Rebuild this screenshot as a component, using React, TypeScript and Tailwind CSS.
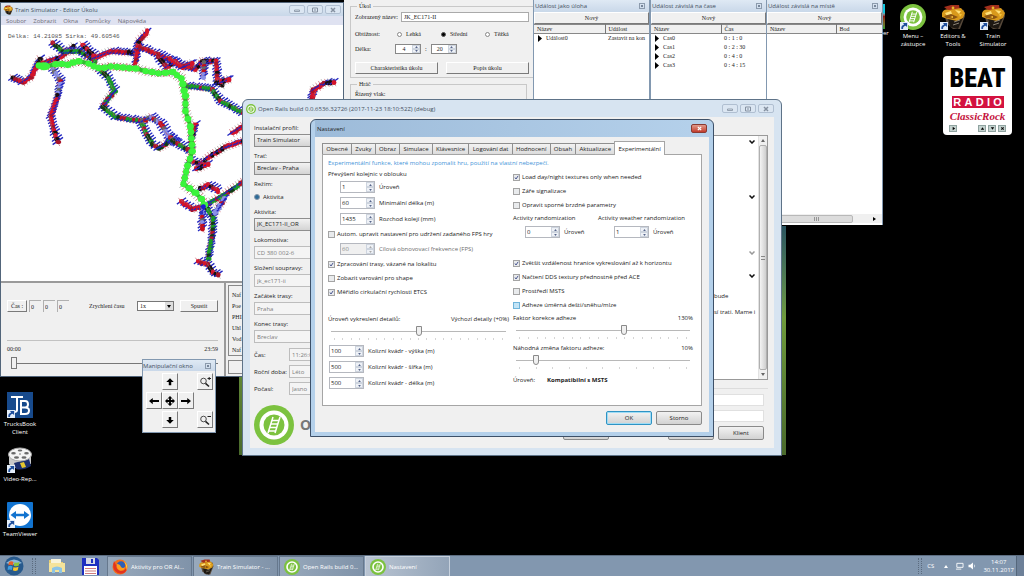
import React, { useState } from 'react';
import clsx from 'clsx';

const SANS = "font-['Open_Sans','Noto_Sans',sans-serif]";
const SERIF = "font-['Liberation_Serif',serif]";

/* ---------- icons ---------- */

const OpenRailsIcon = ({ className }: { className: string }) => (
  <svg viewBox="0 0 40 40" className={className} aria-hidden="true">
    <circle cx="20" cy="20" r="20" fill="#7cc23f" />
    <circle cx="20" cy="20" r="14.500" fill="#fff" />
    <circle cx="20" cy="20" r="10.500" fill="#7cc23f" />
    <g stroke="#fff" fill="none" strokeWidth="1.500">
      <path d="M14 28 L19 12 M21 28 L26 12" />
      <path d="M14.500 26 L21.500 26 M15.500 22.500 L23 22.500 M17 19 L24 19 M18 15.500 L25 15.500" />
    </g>
  </svg>
);

const TrainSimIcon = ({ className }: { className: string }) => (
  <svg viewBox="0 0 26 26" className={className} aria-hidden="true">
    <path d="M3 7 L7 20 L13 25 L20 25 L25 12 L24 6 L12 4 Z" fill="#57493a" />
    <path d="M8 14 L20 11 L23 14 L18 25 L10 23 Z" fill="#1d1812" />
    <path d="M4 3 L11 1 L19 1 L20 6 L9 7 Z" fill="#a3301c" />
    <path d="M2 9 Q4 4 9 6 L21 4 L25 9 L23 14 L17 17 L8 15 L2 13 Z" fill="#d99a1c" />
    <path d="M5 9 L11 7 L12 10 L7 12 Z M15 6 L21 7 L19 10 Z" fill="#ffe07a" />
    <path d="M4 12 L11 10 L18 13 L14 15 L6 14 Z" fill="#8b5512" />
    <path d="M10 13 L13 12 L13 14 Z M19 10 L22 10 L20 13 Z" fill="#f6c43c" />
    <path d="M14 18 L20 16 M13 21 L19 19" stroke="#8a8173" />
    <circle cx="13" cy="4" r="1.400" fill="#e8b62c" />
  </svg>
);

const ShortcutArrow = () => (
  <svg
    viewBox="0 0 9 9"
    className="absolute bottom-0 left-0 size-2"
    aria-hidden="true"
  >
    <rect width="9" height="9" fill="#e3edf8" />
    <path
      d="M1.500 8 Q1 3.500 4.500 3 L3.500 1 H8 V5.500 L6.300 4.300 Q3 5 3.500 8 Z"
      fill="#1f4f9c"
    />
  </svg>
);

const TrucksBookIcon = () => (
  <svg viewBox="0 0 26 26" className="size-full" aria-hidden="true">
    <rect width="26" height="26" fill="#174a8c" />
    <path d="M4 5 H16 M10 5 V18 Q10 20 7 20" stroke="#fff" strokeWidth="2" fill="none" />
    <path
      d="M14 9 V22 H18 Q22 22 22 18.500 Q22 15.500 18 15.500 H14 M18 15.500 Q21 15.500 21 12.300 Q21 9 18 9 H13"
      stroke="#fff"
      strokeWidth="2"
      fill="none"
    />
  </svg>
);

const VideoReelIcon = () => (
  <svg viewBox="0 0 26 26" className="size-full" aria-hidden="true">
    <path d="M2 8 V17 Q8 23 13 20 L24 17 V8 Z" fill="#c9c9c9" />
    <path d="M7 16 L22 12 L24 19 Q16 24 9 22 Z" fill="#1c2f6e" />
    <path d="M13 16 L17 15 L19 20 L15 21 Z" fill="#e5c62e" />
    <ellipse cx="13" cy="7.500" rx="11.500" ry="6.500" fill="#f4f4f4" stroke="#aaa" />
    <g fill="#6a6a6a">
      <ellipse cx="13" cy="3.600" rx="2.300" ry="1" />
      <ellipse cx="6.500" cy="6.300" rx="2.300" ry="1.200" />
      <ellipse cx="19.500" cy="6.300" rx="2.300" ry="1.200" />
      <ellipse cx="9.500" cy="10.500" rx="2.500" ry="1.300" />
      <ellipse cx="17" cy="10.500" rx="2.500" ry="1.300" />
      <circle cx="13" cy="7" r=".8" />
    </g>
  </svg>
);

const TeamViewerIcon = () => (
  <svg viewBox="0 0 26 26" className="size-full" aria-hidden="true">
    <rect width="26" height="26" rx="1" fill="#1173cf" />
    <circle cx="13" cy="13" r="11" fill="#fff" />
    <path d="M3.500 13 L9 9 V11.800 H17 V9 L22.500 13 L17 17 V14.200 H9 V17 Z" fill="#1173cf" />
  </svg>
);

const FirefoxIcon = () => (
  <svg viewBox="0 0 16 16" className="size-4 shrink-0" aria-hidden="true">
    <circle cx="8" cy="8" r="7.500" fill="#f0701c" />
    <path d="M2 2 Q0 8 3 12 Q7 16 12 14 Q16 11 15 6 Q14 12 9 12 Q4 11 4 6 Z" fill="#e2331f" />
    <circle cx="9" cy="6.500" r="4.200" fill="#2c5fb8" />
    <path d="M5 5 Q8 5 9 8 Q11 10 13 8 Q12 12 8 11.500 Q4 10 5 5 Z" fill="#ff9d1f" />
    <path d="M12 2 Q17 6 14.500 12 Q15 7 12 2 Z" fill="#ffcf3a" />
  </svg>
);

const FloppyIcon = () => (
  <svg viewBox="0 0 17 17" className="size-[17px] shrink-0" aria-hidden="true">
    <path d="M0 0 H15 L17 2 V17 H0 Z" fill="#1d2fc0" />
    <rect x="4" width="9" height="6" fill="#d5d9e6" />
    <rect x="9" y="1" width="2" height="4" fill="#1d2fc0" />
    <rect x="2" y="8" width="13" height="9" fill="#fff" />
    <path d="M3 10.500 H14 M3 13 H14 M3 15.500 H14" stroke="#b44" strokeWidth=".7" />
  </svg>
);

const ExplorerIcon = () => (
  <svg viewBox="0 0 18 16" className="h-4 w-[18px] shrink-0" aria-hidden="true">
    <path d="M1 2 H7 L8 4 H15 V13 H1 Z" fill="#e8cf72" />
    <path d="M3 1 H13 V6 H3 Z" fill="#f7f3da" />
    <path d="M1 5 H17 V14 H1 Z" fill="#f5e39a" />
    <path d="M4 10 Q9 7 14 10 V15 H11 V12 H7 V15 H4 Z" fill="#8cc4e6" />
  </svg>
);

const StartOrb = () => (
  <svg viewBox="0 0 20 20" className="size-5 shrink-0" aria-hidden="true">
    <circle cx="10" cy="10" r="9.500" fill="#285a8d" />
    <path d="M2 7 Q10 0 18 7 Q10 10 2 7 Z" fill="#8db9da" />
    <path d="M5 6 Q7.500 4.500 9.500 6 L8.800 9.500 Q6.500 8 4.200 9.500 Z" fill="#e8622a" />
    <path d="M10.500 6.300 Q13 7.500 15.600 6 L14.800 9.600 Q12.500 11 9.800 9.800 Z" fill="#8cc63c" />
    <path d="M4 10.500 Q6.500 9 8.600 10.500 L7.800 14 Q5.500 12.800 3.600 14 Z" fill="#3f9de0" />
    <path d="M9.600 10.900 Q12 12 14.500 10.700 L13.700 14.200 Q11.300 15.500 8.800 14.300 Z" fill="#f7c62d" />
  </svg>
);

/* ---------- route map ---------- */

type Pt = [number, number];

const MAIN_ROUTE: Pt[] = [
  [38, 64], [45, 65], [55, 63], [67, 63], [78, 60], [88, 62], [98, 67],
  [110, 65], [135, 67], [145, 70], [158, 72], [172, 71], [181, 77],
  [185, 95], [185, 110], [190, 125], [192, 150], [187, 165], [183, 183],
  [195, 192], [201, 198], [204, 204],
];

const BRANCHES: { pts: Pt[]; tone: 'red' | 'green' | 'blue' }[] = [
  { tone: 'red', pts: [[12, 77], [22, 81], [30, 76], [36, 64], [39, 58]] },
  { tone: 'blue', pts: [[52, 68], [60, 80], [57, 95]] },
  { tone: 'red', pts: [[57, 95], [50, 115], [54, 132], [57, 141]] },
  { tone: 'red', pts: [[42, 62], [60, 56], [73, 45]] },
  { tone: 'green', pts: [[52, 42], [62, 50], [80, 50], [95, 60]] },
  { tone: 'red', pts: [[82, 44], [95, 56], [110, 50], [135, 52], [138, 40], [147, 30]] },
  { tone: 'red', pts: [[138, 46], [135, 62]] },
  { tone: 'red', pts: [[140, 46], [155, 52], [168, 58], [180, 64], [195, 68], [202, 60], [216, 60], [217, 78], [222, 84]] },
  { tone: 'red', pts: [[158, 56], [166, 66], [176, 60]] },
  { tone: 'red', pts: [[170, 58], [182, 66], [192, 62]] },
  { tone: 'blue', pts: [[204, 62], [203, 76]] },
  { tone: 'red', pts: [[216, 82], [229, 78]] },
  { tone: 'green', pts: [[99, 68], [108, 77], [114, 90], [107, 98], [102, 106], [115, 116], [140, 120]] },
  { tone: 'green', pts: [[140, 120], [146, 133], [152, 143], [158, 147], [166, 143], [170, 136]] },
  { tone: 'blue', pts: [[142, 120], [151, 116], [160, 122], [168, 135], [176, 142]] },
  { tone: 'green', pts: [[172, 140], [190, 150]] },
  { tone: 'green', pts: [[186, 85], [198, 86], [212, 88], [220, 100], [243, 112]] },
  { tone: 'red', pts: [[195, 124], [191, 140]] },
  { tone: 'red', pts: [[190, 160], [200, 163], [210, 155], [225, 146], [243, 140]] },
  { tone: 'red', pts: [[196, 168], [208, 163]] },
  { tone: 'red', pts: [[232, 132], [243, 125]] },
  { tone: 'green', pts: [[206, 204], [225, 193], [243, 181]] },
  { tone: 'red', pts: [[200, 188], [208, 184], [218, 190]] },
  { tone: 'red', pts: [[181, 201], [192, 208], [204, 206]] },
  { tone: 'blue', pts: [[204, 204], [202, 216], [202, 228]] },
  { tone: 'green', pts: [[205, 205], [213, 217], [212, 235], [208, 258]] },
  { tone: 'blue', pts: [[224, 198], [215, 212]] },
  { tone: 'red', pts: [[198, 261], [208, 264], [213, 272], [218, 274]] },
  { tone: 'red', pts: [[312, 97], [313, 89], [324, 82], [334, 81]] },
];

const TONES = {
  red: ['#d4142a', '#d4142a', '#1a1010', '#a81428'],
  green: ['#1a9a28', '#1a9a28', '#123c14', '#b0182a'],
  blue: ['#8a90e8', '#c4101c', '#8a90e8', '#666'],
};

// walk the polyline and return evenly spaced points
const sample = (pts: Pt[], step: number): Pt[] => {
  const out: Pt[] = [];
  for (let i = 0; i < pts.length - 1; i++) {
    const [x1, y1] = pts[i];
    const [x2, y2] = pts[i + 1];
    const n = Math.max(1, Math.round(Math.hypot(x2 - x1, y2 - y1) / step));
    for (let k = 0; k < n; k++) {
      out.push([x1 + ((x2 - x1) * k) / n, y1 + ((y2 - y1) * k) / n]);
    }
  }
  out.push(pts[pts.length - 1]);
  return out;
};

const noise = (n: number) => {
  const v = Math.sin(n * 127.1 + 11.7) * 43758.5453;
  return v - Math.floor(v);
};

const RouteMap = () => (
  <svg viewBox="0 24 343 256" className="block h-64 w-full" aria-label="Mapa trati">
    {BRANCHES.map(({ pts, tone }, b) => (
      <g key={b}>
        <polyline points={pts.join(' ')} fill="none" stroke="#9a8c8c" strokeWidth="4" />
        {sample(pts, 3).map(([x, y], i) => {
          const r = noise(b * 97 + i);
          const len = 3.6 + r * 1.6;
          return (
            <g key={i}>
              <path
                d={`M${x - len} ${y + len * 0.5} L${x + len} ${y - len * 0.9}`}
                stroke="#2024c0"
                strokeWidth="1.300"
              />
              <path
                d={`M${x - 3} ${y - 4} L${x + 2} ${y + 4}`}
                stroke={r > 0.5 ? '#c04858' : '#888'}
                strokeWidth=".6"
              />
              <ellipse
                cx={x + r - 0.5}
                cy={y + noise(i + 3) - 0.5}
                rx={2 + r * 0.9}
                ry={2.9 - r * 0.8}
                fill={TONES[tone][Math.floor(noise(b + i * 7) * 4)]}
              />
            </g>
          );
        })}
      </g>
    ))}
    {sample(MAIN_ROUTE, 3).map(([x, y], i) => (
      <path
        key={i}
        d={`M${x - 4} ${y + 4} L${x + 4} ${y - 4} M${x - 3} ${y - 4} L${x + 3} ${y + 4}`}
        stroke={i % 2 ? '#8a8a8a' : '#a33'}
        strokeWidth=".7"
      />
    ))}
    <polyline
      points={MAIN_ROUTE.join(' ')}
      fill="none"
      stroke="#2fbf2f"
      strokeWidth="4"
      strokeLinejoin="round"
    />
    {sample(MAIN_ROUTE, 7).map(([x, y], i) => (
      <ellipse
        key={i}
        cx={x}
        cy={y + noise(i) - 0.5}
        rx={3 + noise(i + 9)}
        ry="3.200"
        fill="#3cf43c"
      />
    ))}
    <ellipse cx="43" cy="65" rx="6" ry="4" fill="#3cf43c" />
    <circle cx="203" cy="206" r="2.500" fill="#1a1fd0" />
    <circle cx="201" cy="212" r="2" fill="#2a2fc0" />
  </svg>
);

/* ---------- small controls ---------- */

const CaptionButtons = () => (
  <div className="flex gap-0.5">
    {['Minimalizovat', 'Maximalizovat', 'Zavřít'].map((name, i) => (
      <button
        key={name}
        aria-label={name}
        className="flex h-[9px] w-4 items-center justify-center rounded-xs border border-[#b0bfd1] bg-[#dbe6f2]"
      >
        <svg viewBox="0 0 8 6" className="h-1.5 w-2" fill="none" stroke="#8490a0">
          {i === 0 && <path d="M1.500 4.500 V3 H6.500 V4.500 Z" strokeWidth=".8" />}
          {i === 1 && <path d="M1.500 1 H6.500 V5 H1.500 Z M3 3 H5" />}
          {i === 2 && <path d="M2 1 L6 5 M6 1 L2 5" strokeWidth="1.500" />}
        </svg>
      </button>
    ))}
  </div>
);

const ToolClose = () => (
  <button
    aria-label="Zavřít"
    className="flex size-1.5 items-center justify-center border border-[#8c9bad]"
  >
    <svg viewBox="0 0 4 4" className="size-1" stroke="#77869a">
      <path d="M1 1 L3 3 M3 1 L1 3" />
    </svg>
  </button>
);

const RaisedButton = ({
  className,
  children,
  label,
}: {
  className?: string;
  children: React.ReactNode;
  label?: string;
}) => (
  <button
    aria-label={label}
    className={clsx(
      'flex items-center justify-center border-t border-l border-r border-b border-t-white border-l-white border-r-[#7a7a7a] border-b-[#7a7a7a] bg-[#f0f0f0]',
      className,
    )}
  >
    {children}
  </button>
);

const Arrows = ({ name, disabled }: { name: string; disabled?: boolean }) => (
  <span className="flex w-2 flex-col">
    {['více', 'méně'].map((dir, i) => (
      <button
        key={dir}
        disabled={disabled}
        aria-label={`${name} ${dir}`}
        className="flex flex-1 items-center justify-center border border-[#cdd4de] bg-[#eef1f6]"
      >
        <svg viewBox="0 0 4 3" className="h-0.5 w-[3px]" fill={disabled ? '#aaa' : '#55648a'}>
          <path d={i === 0 ? 'M2 0 L4 3 H0 Z' : 'M0 0 H4 L2 3 Z'} />
        </svg>
      </button>
    ))}
  </span>
);

interface SpinnerProps {
  label: string;
  value: string;
  disabled?: boolean;
  className?: string;
}

const Spinner = ({ label, value, disabled, className }: SpinnerProps) => (
  <label className={clsx('flex h-4 items-center gap-1', className)}>
    <span
      className={clsx(
        'flex h-3 w-[35px] border border-[#b5b8bf]',
        disabled ? 'bg-[#f0f0f0] text-[#8b8b8b]' : 'bg-white',
      )}
    >
      <input
        defaultValue={value}
        disabled={disabled}
        className="h-full w-full min-w-0 flex-1 pl-px leading-[9px] outline-none"
      />
      <Arrows name={label} disabled={disabled} />
    </span>
    <span className={clsx(disabled && 'text-[#6d6d6d]')}>{label}</span>
  </label>
);

interface CheckProps {
  label: string;
  checked?: boolean;
  hot?: boolean;
}

const Check = ({ label, checked, hot }: CheckProps) => (
  <label className="flex h-[14px] items-center gap-0.5 whitespace-nowrap">
    <span className="relative flex size-[7px] shrink-0">
      <input
        type="checkbox"
        defaultChecked={checked}
        className={clsx(
          'peer size-[7px] appearance-none border',
          hot ? 'border-[#6fb4da] bg-[#c3e4f6]' : 'border-[#a4a4a4] bg-[#e9ebed]',
        )}
      />
      <svg
        viewBox="0 0 7 7"
        className="pointer-events-none absolute inset-0 hidden size-[7px] peer-checked:block"
        fill="none"
        stroke="#4a5690"
      >
        <path d="M2 3.500 L3 5 L5.200 1.800" />
      </svg>
    </span>
    {label}
  </label>
);

interface SliderProps {
  label: string;
  ticks: number;
  min: number;
  max: number;
  value: number;
}

const Slider = ({ label, ticks, min, max, value }: SliderProps) => {
  const [val, setVal] = useState(value);
  return (
    <div className="flex h-[18px] flex-col">
      <input
        type="range"
        aria-label={label}
        min={min}
        max={max}
        value={val}
        onChange={(e) => setVal(Number(e.target.value))}
        className="h-3 w-full appearance-none bg-[linear-gradient(#b8b8b8,#b8b8b8)] bg-[length:100%_1px] bg-center bg-no-repeat [&::-webkit-slider-thumb]:h-2.5 [&::-webkit-slider-thumb]:w-1.5 [&::-webkit-slider-thumb]:appearance-none [&::-webkit-slider-thumb]:rounded-b-[3px] [&::-webkit-slider-thumb]:border [&::-webkit-slider-thumb]:border-[#8a8a8a] [&::-webkit-slider-thumb]:bg-[#f0f0f0]"
      />
      <div className="flex justify-between px-[3px] pt-px">
        {Array.from({ length: ticks }).map((_, i) => (
          <i key={i} className="h-0.5 w-px bg-[#d5d5d5]" />
        ))}
      </div>
    </div>
  );
};

/* ---------- Train Simulator editor ---------- */

const STATUS_LINES = ['Naf', 'Poe', 'PHI', 'Uhl', 'Vod', 'Naf'];

const EditorWindow = () => (
  <section className="absolute top-0.5 left-0 w-[344px] border border-[#52657a] bg-[#f0f0f0]">
    <header className="flex h-[13px] items-center gap-0.5 bg-linear-to-b from-[#dfe9f4] to-[#c9d8e9] px-0.5 text-[#44505e]">
      <TrainSimIcon className="size-2.5" />
      <h1 className="flex-1">Train Simulator - Editor Úkolu</h1>
      <CaptionButtons />
    </header>
    <nav className="flex h-[9px] items-center gap-[7px] bg-[#dfe2f1] px-[5px] text-[#6e6e78]">
      {['Soubor', 'Zobrazit', 'Okna', 'Pomůcky', 'Nápověda'].map((m) => (
        <button key={m}>{m}</button>
      ))}
    </nav>
    <div className="relative border-b-2 border-[#9a9a9a] bg-white">
      <p className="absolute top-2 left-[7px] font-['Liberation_Mono',monospace] text-[#555]">
        Délka: 14.21085 Sirka: 49.60546
      </p>
      <RouteMap />
    </div>

    <div className={clsx('flex h-[93px]', SERIF)}>
      <div className="flex w-[225px] flex-col border-r-2 border-[#9a9a9a] px-1.5">
        <div className="flex items-center pt-[17px]">
          <RaisedButton className="mr-0.5 h-3 w-5">Čas :</RaisedButton>
          <span className="flex gap-0.5">
            {['hodiny', 'minuty', 'sekundy'].map((unit) => (
              <input
                key={unit}
                aria-label={unit}
                defaultValue="0"
                className="h-3 w-3 border-t border-l border-[#b0b0b0] px-px"
              />
            ))}
          </span>
          <label htmlFor="speed" className="ml-5 w-12">
            Zrychlení času
          </label>
          <span className="relative flex">
            <select
              id="speed"
              className="h-2.5 w-[37px] appearance-none border border-[#777] bg-white px-0.5"
            >
              <option>1x</option>
            </select>
            <span className="pointer-events-none absolute inset-y-px right-px flex w-2 items-center justify-center bg-[#ddd]">
              <svg viewBox="0 0 4 3" className="h-[3px] w-1">
                <path d="M0 0 H4 L2 3 Z" />
              </svg>
            </span>
          </span>
          <RaisedButton className="ml-auto h-3 w-[38px]">Spustit</RaisedButton>
        </div>
        <hr className="mt-7 mb-1 border-[#c2c2c2]" />
        <div className="flex justify-between">
          <span>00:00</span>
          <span>23:59</span>
        </div>
        <input
          type="range"
          aria-label="Čas simulace"
          defaultValue={0}
          className="ml-1 h-5 appearance-none bg-[linear-gradient(#777,#777)] bg-[length:100%_1px] bg-center bg-no-repeat [&::-webkit-slider-thumb]:h-3 [&::-webkit-slider-thumb]:w-1.5 [&::-webkit-slider-thumb]:appearance-none [&::-webkit-slider-thumb]:border [&::-webkit-slider-thumb]:border-[#777] [&::-webkit-slider-thumb]:bg-[#f0f0f0]"
        />
      </div>
      <div className="flex flex-1 flex-col gap-1 p-0.5">
        <div className="flex flex-1 flex-col justify-around border border-[#888] pt-1 pl-[3px]">
          {STATUS_LINES.map((line, i) => (
            <span key={i}>{line}</span>
          ))}
        </div>
        <div className="h-3.5 border border-[#888]" />
      </div>
    </div>
  </section>
);

const TaskSpinner = ({ name, value }: { name: string; value: string }) => (
  <span className="flex h-2.5 w-[26px] border border-[#888] bg-white">
    <input
      aria-label={name}
      defaultValue={value}
      className="w-full min-w-0 flex-1 text-center"
    />
    <Arrows name={name} />
  </span>
);

const TaskForm = () => (
  <section
    className={clsx(
      'absolute top-0 left-[344px] h-[110px] w-[189px] bg-[#f0f0f0] px-1.5 pt-0.5',
      SERIF,
    )}
  >
    <fieldset className="h-[76px] border border-[#c8c8c8] px-1">
      <legend className="ml-0.5 px-0.5 leading-2">Úkol</legend>
      <label className="mt-0.5 flex items-center gap-0.5">
        <span className="w-11 whitespace-nowrap">Zobrazený název:</span>
        <input
          defaultValue="JK_EC171-II"
          className="h-2.5 min-w-0 flex-1 border border-[#aaa] bg-white px-0.5"
        />
      </label>
      <div className="mt-1.5 flex h-3 items-center">
        <span className="w-[42px]">Obtížnost:</span>
        {['Lehká', 'Střední', 'Těžká'].map((level) => (
          <label key={level} className="flex w-11 items-center gap-1">
            <input
              type="radio"
              name="difficulty"
              defaultChecked={level === 'Střední'}
              className="size-[5px] appearance-none rounded-full border border-[#888] bg-white checked:border-[#555] checked:bg-black"
            />
            {level}
          </label>
        ))}
      </div>
      <div className="mt-1 flex h-2.5 items-center gap-1">
        <span className="w-9">Délka:</span>
        <TaskSpinner name="hodin" value="4" />
        <span>:</span>
        <TaskSpinner name="minut" value="20" />
      </div>
      <div className="mt-2 flex gap-2">
        <RaisedButton className="h-3 flex-1">Charakteristika úkolu</RaisedButton>
        <RaisedButton className="h-3 flex-1">Popis úkolu</RaisedButton>
      </div>
    </fieldset>
    <fieldset className="mt-0.5 h-9 border border-[#c8c8c8] px-1">
      <legend className="ml-0.5 px-0.5 leading-2">Hráč</legend>
      <p className="pt-0.5">Řízený vlak:</p>
    </fieldset>
  </section>
);

interface EventWindowProps {
  title: string;
  second: string;
  rows: [string, string][];
  place: string;
  split: string;
  scroll?: boolean;
}

const EventWindow = ({ title, second, rows, place, split, scroll }: EventWindowProps) => (
  <section
    className={clsx(
      'absolute top-0 flex h-[225px] w-[117px] flex-col border-x border-[#8298b0] bg-white',
      place,
    )}
  >
    <header className="flex h-3 items-center justify-between bg-linear-to-b from-[#dfe9f4] to-[#c9d8e9] pr-1 pl-px text-[#44505e]">
      <h2 className="whitespace-nowrap">{title}</h2>
      <ToolClose />
    </header>
    <RaisedButton className={clsx('h-3 w-full', SERIF)}>Nový</RaisedButton>
    <table className={clsx('w-full table-fixed text-left', SERIF)}>
      <thead>
        <tr className="h-[9px] border-y border-[#888] bg-[#f0f0f0]">
          <th className={clsx('border-r border-[#777] pl-[3px] font-normal', split)}>
            Název
          </th>
          <th className="pl-[3px] font-normal">{second}</th>
        </tr>
      </thead>
      <tbody>
        {rows.map(([name, value]) => (
          <tr key={name} className="h-[9px]">
            <td className="pl-1">
              <span className="flex items-center gap-1">
                <svg viewBox="0 0 4 7" className="h-[7px] w-1">
                  <path d="M0 0 L4 3.500 L0 7 Z" />
                </svg>
                {name}
              </span>
            </td>
            <td className="pl-[3px] whitespace-nowrap">{value}</td>
          </tr>
        ))}
      </tbody>
    </table>
    {scroll && (
      <div className="mt-auto mb-0.5 flex h-[9px] items-center bg-[#f0f0f0]">
        <div className="flex h-2 w-[86px] items-center justify-center rounded-xs border border-[#b8b8b8] bg-[#dcdcdc]">
          <svg viewBox="0 0 5 4" className="ml-3 h-1 w-[5px]" stroke="#777">
            <path d="M.5 0 V4 M2.500 0 V4 M4.500 0 V4" strokeWidth=".700" />
          </svg>
        </div>
        <svg viewBox="0 0 3 4" className="mr-1.5 ml-auto h-1 w-[3px]">
          <path d="M0 0 L3 2 L0 4 Z" />
        </svg>
      </div>
    )}
  </section>
);

const PAD: { name: string; d: string; cell: string }[] = [
  { name: 'Nahoru', d: 'M8 2 L14 8 H10 V13 H6 V8 H2 Z', cell: 'col-start-2 row-start-1' },
  { name: 'Vlevo', d: 'M0 8 L6 3 V6.500 H16 V9.500 H6 V13 Z', cell: 'col-start-1 row-start-2' },
  {
    name: 'Na střed',
    d: 'M8 0 L12 4 H9.500 V6.500 H12 V4 L16 8 L12 12 V9.500 H9.500 V12 H12 L8 16 L4 12 H6.500 V9.500 H4 V12 L0 8 L4 4 V6.500 H6.500 V4 H4 Z',
    cell: 'col-start-2 row-start-2',
  },
  { name: 'Vpravo', d: 'M16 8 L10 3 V6.500 H0 V9.500 H10 V13 Z', cell: 'col-start-3 row-start-2' },
  { name: 'Dolů', d: 'M8 14 L14 8 H10 V3 H6 V8 H2 Z', cell: 'col-start-2 row-start-3' },
];

const ManipulationWindow = () => (
  <section className="absolute top-[359px] left-[142px] w-[74px] border border-[#8298b0] bg-[#f0f0f0]">
    <header className="flex h-[11px] items-center justify-between bg-linear-to-b from-[#dfe9f4] to-[#c9d8e9] pr-1 text-[#44505e]">
      <h2>Manipulační okno</h2>
      <ToolClose />
    </header>
    <div className="grid grid-cols-[16px_16px_16px_1fr] gap-y-0.5 p-0.5 pb-1 pl-[3px]">
      {PAD.map(({ name, d, cell }) => (
        <RaisedButton key={name} label={name} className={clsx('h-[17px] w-4', cell)}>
          <svg viewBox="0 0 16 16" className="size-2.5">
            <path d={d} />
          </svg>
        </RaisedButton>
      ))}
      {['+', '-'].map((sign) => (
        <RaisedButton
          key={sign}
          label={sign === '+' ? 'Přiblížit' : 'Oddálit'}
          className={clsx(
            'col-start-4 h-[17px] w-4 justify-self-end',
            sign === '+' ? 'row-start-1' : 'row-start-3',
          )}
        >
          <svg viewBox="0 0 12 12" className="size-3" fill="none" stroke="#222">
            <circle cx="4.500" cy="5" r="2.800" strokeWidth=".8" />
            <path d="M6.500 7.300 L10 10.500" strokeWidth="1.600" />
            <path d={sign === '+' ? 'M8.500 2.500 H12 M10.200 1 V4' : 'M8.500 2.500 H12'} />
          </svg>
        </RaisedButton>
      ))}
    </div>
  </section>
);

/* ---------- Open Rails launcher ---------- */

const FIELD = 'h-[13px] w-full appearance-none border px-0.5 leading-[11px]';

const Field = ({
  label,
  value,
  editable,
}: {
  label: string;
  value: string;
  editable?: boolean;
}) => (
  <label className="flex h-7 flex-col">
    <span className="h-3 leading-3">{label}</span>
    {editable ? (
      <select className={clsx(FIELD, 'border-[#8e8e8e] bg-linear-to-b from-[#f2f2f2] to-[#d4d4d4]')}>
        <option>{value}</option>
      </select>
    ) : (
      <input
        disabled
        defaultValue={value}
        className={clsx(FIELD, 'border-[#bdbdbd] bg-[#f4f4f4] text-[#7d7d7d]')}
      />
    )}
  </label>
);

const GreyButton = ({
  children,
  className,
}: {
  children: React.ReactNode;
  className?: string;
}) => (
  <button
    className={clsx(
      'h-3.5 w-[46px] rounded-xs border bg-linear-to-b from-[#f2f2f2] to-[#d2d2d2]',
      className ?? 'border-[#8a8a8a]',
    )}
  >
    {children}
  </button>
);

const Chevron = ({ dim }: { dim?: boolean }) => (
  <svg viewBox="0 0 6 4" className="h-1 w-1.5 shrink-0" fill="none" stroke={dim ? '#999' : '#111'}>
    <path d="M.5 .5 L3 3 L5.500 .5" strokeWidth="1.500" />
  </svg>
);

const LauncherWindow = () => (
  <section className="absolute top-[99px] left-[242px] w-[540px] rounded-t-md border border-[#5e7388] bg-[#d7e4f1] px-[7px] pb-[7px]">
    <header className="flex h-[17px] items-center gap-0.5 text-[#44505e]">
      <OpenRailsIcon className="-ml-1 size-2.5" />
      <h2 className="flex-1">Open Rails build 0.0.6536.32726 (2017-11-23 18:10:52Z) (debug)</h2>
      <CaptionButtons />
    </header>
    <div className="flex h-[331px] justify-between bg-[#f0f0f0] pr-1.5 pl-1">
      <div className="flex w-[110px] flex-col pt-[5px]">
        <Field label="Instalační profil:" value="Train Simulator" editable />
        <Field label="Trať:" value="Breclav - Praha" editable />
        <div className="h-7">
          <p className="h-3 leading-3">Režim:</p>
          <label className="flex h-[13px] items-center gap-[3px]">
            <input
              type="radio"
              name="mode"
              defaultChecked
              className="size-1.5 appearance-none rounded-full border border-[#8a98a8] bg-white checked:bg-[#2d6b98]"
            />
            Aktivita
          </label>
        </div>
        <Field label="Aktivita:" value="JK_EC171-II_OR" editable />
        <Field label="Lokomotiva:" value="CD 380 002-6" />
        <Field label="Složení soupravy:" value="jk_ec171-ii" />
        <Field label="Začátek trasy:" value="Praha" />
        <Field label="Konec trasy:" value="Breclav" />
        {[
          ['Čas:', '11:26:00'],
          ['Roční doba:', 'Léto'],
          ['Počasí:', 'Jasno'],
        ].map(([label, value]) => (
          <label key={label} className="flex h-[17px] items-center">
            <span className="w-[35px] shrink-0 whitespace-nowrap">{label}</span>
            <input
              disabled
              defaultValue={value}
              className={clsx(FIELD, 'min-w-0 border-[#bdbdbd] bg-[#f4f4f4] text-[#7d7d7d]')}
            />
          </label>
        ))}
        <div className="mt-2 flex items-center gap-1.5 text-sm text-[#777]">
          <OpenRailsIcon className="size-10 shrink-0" />
          <b>O</b>
        </div>
      </div>
      <div className="flex w-[225px] flex-col items-end pt-[18px]">
        <div className="flex h-[245px] w-full border border-[#999] bg-white">
          <div className="min-w-0 flex-1 pt-[152px] pl-[170px] leading-4 whitespace-nowrap">
            <p>bude</p>
            <p>sí trati. Mame i</p>
          </div>
          <div className="flex w-[13px] flex-col items-center pt-1">
            <Chevron />
            <span className="h-[51px]" />
            <Chevron />
            <span className="h-[52px]" />
            <Chevron dim />
            <span className="h-[19px]" />
            <Chevron />
          </div>
          <div className="flex w-[9px] flex-col items-center gap-[3px] border-l border-[#e2e2e2] bg-[#f0f0f0] py-[3px]">
            <svg viewBox="0 0 4 3" className="h-[3px] w-1" fill="#666">
              <path d="M2 0 L4 3 H0 Z" />
            </svg>
            <div className="flex w-2 flex-1 items-center justify-center rounded-xs border border-[#b0b0b0] bg-linear-to-r from-[#f4f4f4] to-[#cfcfcf]">
              <i className="h-1 w-1 border-y border-[#888]" />
            </div>
            <svg viewBox="0 0 4 3" className="h-[3px] w-1" fill="#666">
              <path d="M0 0 H4 L2 3 Z" />
            </svg>
          </div>
        </div>
        <div className="mt-2 flex w-full flex-col gap-1 border-t border-[#dcdcdc] pt-[5px] pr-1">
          <input
            aria-label="Uživatel"
            className="h-3 w-full border border-[#e0e0e0] bg-white"
          />
          <input
            aria-label="Hostitel"
            className="h-3 w-full border border-[#e0e0e0] bg-white"
          />
          <div className="flex gap-1 pl-5">
            <GreyButton>Přehrát</GreyButton>
            <span className="flex-1" />
            <GreyButton>Server</GreyButton>
            <GreyButton>Klient</GreyButton>
          </div>
        </div>
      </div>
    </div>
  </section>
);

/* ---------- settings dialog ---------- */

const TABS = [
  'Obecné',
  'Zvuky',
  'Obraz',
  'Simulace',
  'Klávesnice',
  'Logování dat',
  'Hodnocení',
  'Obsah',
  'Aktualizace',
  'Experimentální',
];

const ROW_LABEL = 'flex h-3 items-center justify-between';

const SettingsDialog = () => {
  const [tab, setTab] = useState('Experimentální');

  return (
    <section
      role="dialog"
      aria-label="Nastavení"
      className="absolute top-[119px] left-[310px] w-[404px] rounded-t-md border border-[#3d5068] bg-[#b4d0ea] px-1 pb-1 text-[#222]"
    >
      <header className="flex h-[17px] items-center justify-between bg-linear-to-r from-[#9dbbd9] to-[#b5d1eb] px-0.5">
        <h2>Nastavení</h2>
        <button
          aria-label="Zavřít"
          className="flex h-[9px] w-4 items-center justify-center rounded-xs border border-[#8a3a32] bg-linear-to-b from-[#e09a8c] to-[#c1382a]"
        >
          <svg viewBox="0 0 6 6" className="size-[5px]" stroke="#fff" strokeWidth="1.500">
            <path d="M1 1 L5 5 M5 1 L1 5" />
          </svg>
        </button>
      </header>

      <div className="bg-[#f0f0f0] px-[7px] pt-1 pb-[7px]">
        <div role="tablist" className="flex w-[343px] items-end pl-px">
          {TABS.map((t) => (
            <button
              key={t}
              role="tab"
              aria-selected={t === tab}
              onClick={() => setTab(t)}
              className={clsx(
                '-ml-px flex-auto border border-b-0 px-0.5 whitespace-nowrap',
                t === tab
                  ? '-mb-px h-[14px] border-[#a5a5a5] bg-white'
                  : 'h-[11px] border-[#8f8f8f] bg-linear-to-b from-[#f2f2f2] to-[#dcdcdc] leading-[10px]',
              )}
            >
              {t}
            </button>
          ))}
        </div>

        <div
          role="tabpanel"
          className="h-[252px] border border-[#a5a5a5] bg-white pt-px pr-2 pl-[5px]"
        >
          <p className="h-[14px] leading-[14px] text-[#3f93d8]">
            Experimentální funkce, které mohou zpomalit hru, použití na vlastní nebezpečí.
          </p>
          <div className="flex gap-1">
            <div className="flex w-[181px] flex-col">
              <p className="h-[9px] leading-[9px]">Převýšení kolejnic v oblouku</p>
              <Spinner label="Úroveň" value="1" className="pl-3" />
              <Spinner label="Minimální délka (m)" value="60" className="pl-3" />
              <Spinner label="Rozchod kolejí (mm)" value="1435" className="pl-3" />
              <Check label="Autom. upravit nastavení pro udržení zadaného FPS hry" />
              <Spinner
                label="Cílová obnovovací frekvence (FPS)"
                value="60"
                disabled
                className="pl-3"
              />
              <Check label="Zpracování trasy, vázané na lokalitu" checked />
              <Check label="Zobazit varování pro shape" />
              <Check label="Měřidlo cirkulační rychlosti ETCS" checked />
              <div className={clsx(ROW_LABEL, 'mt-3.5')}>
                <span>Úroveň vykreslení detailů:</span>
                <span>Výchozí detaily (+0%)</span>
              </div>
              <div className="px-[3px]">
                <Slider label="Úroveň vykreslení detailů" ticks={21} min={0} max={20} value={10} />
              </div>
              <Spinner label="Kolizní kvádr - výška (m)" value="100" className="pl-px" />
              <Spinner label="Kolizní kvádr - šířka (m)" value="500" className="pl-px" />
              <Spinner label="Kolizní kvádr - délka (m)" value="500" className="pl-px" />
            </div>

            <div className="flex flex-1 flex-col">
              <Check label="Load day/night textures only when needed" checked />
              <Check label="Záře signalizace" />
              <Check label="Opravit sporné brzdné parametry" />
              <div className="grid h-7 grid-cols-[85px_1fr] whitespace-nowrap">
                <div>
                  <p className="h-3 leading-3">Activity randomization</p>
                  <Spinner label="Úroveň" value="0" className="pl-3" />
                </div>
                <div>
                  <p className="h-3 leading-3">Activity weather randomization</p>
                  <Spinner label="Úroveň" value="1" className="pl-4" />
                </div>
              </div>
              <div className="mt-4">
                <Check label="Zvětšit vzdálenost hranice vykreslování až k horizontu" checked />
                <Check label="Načtení DDS textury přednostně před ACE" checked />
                <Check label="Prostředí MSTS" />
                <Check label="Adheze úměrná dešti/sněhu/mlze" hot />
              </div>
              <div className={ROW_LABEL}>
                <span>Faktor korekce adheze</span>
                <span>130%</span>
              </div>
              <div className="px-[3px]">
                <Slider label="Faktor korekce adheze" ticks={20} min={5} max={200} value={127} />
              </div>
              <div className={ROW_LABEL}>
                <span>Náhodná změna faktoru adheze:</span>
                <span>10%</span>
              </div>
              <div className="px-[3px]">
                <Slider label="Náhodná změna faktoru adheze" ticks={11} min={0} max={100} value={10} />
              </div>
              <p className="flex h-4 items-center gap-3">
                <span>Úroveň:</span>
                <b>Kompatibilní s MSTS</b>
              </p>
            </div>
          </div>
        </div>

        <div className="mt-[5px] flex justify-end gap-1">
          <GreyButton className="border-[#2f93c4] ring-1 ring-[#9fdcf5] ring-inset">OK</GreyButton>
          <GreyButton>Storno</GreyButton>
        </div>
      </div>
    </section>
  );
};

/* ---------- desktop ---------- */

const DesktopIcon = ({ label, children }: { label: string; children: React.ReactNode }) => (
  <button className="flex w-10 flex-col items-center gap-0.5 text-center leading-2 text-white">
    <span className="relative block size-[26px]">
      {children}
      <ShortcutArrow />
    </span>
    <span className="whitespace-pre-line">{label}</span>
  </button>
);

const RadioGadget = () => (
  <section className="absolute top-14 right-3 flex h-[79px] w-[69px] flex-col items-center rounded-sm bg-white pt-1">
    <p className="h-9 font-['Roboto_Condensed','Liberation_Sans_Narrow','DejaVu_Sans_Condensed',sans-serif] text-[26px] leading-9 font-black text-black">
      BEAT
    </p>
    <p className="flex h-3 w-[52px] items-center justify-around bg-[#d3123f] font-['Liberation_Sans',sans-serif] text-[11px] leading-3 font-bold text-white">
      {'RADIO'.split('').map((c, i) => (
        <span key={i}>{c}</span>
      ))}
    </p>
    <p className="h-4 font-['Liberation_Serif',serif] text-[11px] leading-4 font-bold text-[#c4123c] italic">
      ClassicRock
    </p>
    <div className="flex w-full gap-0.5 px-1.5 pt-px">
      {[
        ['Přehrát', 'M2 1 L5 3 L2 5 Z'],
        ['Předchozí', 'M3 1.500 L5 4.500 H1 Z'],
        ['Další', 'M3 4.500 L5 1.500 H1 Z'],
        ['Zavřít', 'M1 1 L3 2 L5 1 L4 3 L5 5 L3 4 L1 5 L2 3 Z'],
      ].map(([name, d], i) => (
        <button
          key={name}
          aria-label={name}
          className={clsx(
            'flex h-[7px] w-2 items-center justify-center border border-[#8fa3a0] bg-[#c5d3d0]',
            i === 0 && 'mr-auto',
          )}
        >
          <svg viewBox="0 0 6 6" className="size-[5px]">
            <path d={d} />
          </svg>
        </button>
      ))}
    </div>
  </section>
);

const TaskButton = ({
  icon,
  label,
  active,
}: {
  icon: React.ReactNode;
  label: string;
  active?: boolean;
}) => (
  <button
    className={clsx(
      'flex h-5 w-[85px] items-center gap-[3px] border-x border-t px-1 whitespace-nowrap text-white',
      active
        ? 'border-[#c6d0dc] bg-linear-to-r from-[#b9c4d2] to-[#93a4b8]'
        : 'border-[#66788d] bg-linear-to-r from-[#98a9bc] to-[#8093a9]',
    )}
  >
    {icon}
    {label}
  </button>
);

const Taskbar = () => (
  <footer className="relative flex h-[21px] items-center border-t border-[#5d6e82] bg-[#8297af]">
    <button aria-label="Start" className="ml-1">
      <StartOrb />
    </button>
    <i className="ml-2 h-4 w-1 border-x border-dotted border-[#5b6b7e]" />
    <span className="ml-3 flex items-center gap-4">
      <ExplorerIcon />
      <FloppyIcon />
    </span>
    <div className="ml-2 flex gap-px">
      <TaskButton icon={<FirefoxIcon />} label="Aktivity pro OR Al..." />
      <TaskButton icon={<TrainSimIcon className="size-4 shrink-0" />} label="Train Simulator - ..." />
      <TaskButton icon={<OpenRailsIcon className="size-4 shrink-0" />} label="Open Rails build 0..." />
      <TaskButton icon={<OpenRailsIcon className="size-4 shrink-0" />} label="Nastavení" active />
    </div>
    <div className="ml-auto flex h-full items-center text-white">
      <i className="h-4 w-1 border-x border-dotted border-[#5b6b7e]" />
      <span className="ml-[5px]">CS</span>
      <svg viewBox="0 0 4 3" className="ml-2.5 h-[3px] w-1" fill="#fff">
        <path d="M2 0 L4 3 H0 Z" />
      </svg>
      <svg viewBox="0 0 10 9" className="ml-[7px] h-2 w-[9px]" fill="none" stroke="#fff">
        <path d="M2 1.500 H9 V6 H2 Z M1 8 H7" />
      </svg>
      <svg viewBox="0 0 9 9" className="ml-1 h-2 w-[9px]" fill="#fff" stroke="#fff">
        <path d="M0 3 H2 L5 .500 V8.500 L2 6 H0 Z" stroke="none" />
        <path d="M6.500 3 Q7.500 4.500 6.500 6" fill="none" strokeWidth=".700" />
      </svg>
      <div className="ml-1.5 text-center leading-2">
        <p>14:07</p>
        <p>30.11.2017</p>
      </div>
      <i className="ml-0.5 h-full w-2 border-l border-[#55677b] bg-[#6d8098]" />
    </div>
  </footer>
);

export default function App() {
  return (
    <main
      className={clsx(
        'flex min-h-screen w-full flex-col overflow-hidden bg-black text-[6px] leading-2 text-[#222]',
        SANS,
      )}
    >
      <div className="relative flex-1 overflow-hidden">
        {/* strip of the wallpaper behind the windows */}
        <div className="absolute top-[226px] left-[239px] h-[229px] w-[547px] bg-linear-to-b from-[#2b5560] via-[#6f9b3c] via-40% to-[#4a6a2c]" />

        <EditorWindow />
        <TaskForm />
        <EventWindow
          title="Událost jako úloha"
          second="Událost"
          rows={[['Událost0', 'Zastavit na kon']]}
          place="left-[533px]"
          split="w-[71px]"
        />
        <EventWindow
          title="Událost závislá na čase"
          second="Čas"
          rows={[
            ['Cas0', '0 : 1 : 0'],
            ['Cas1', '0 : 2 : 30'],
            ['Cas2', '0 : 4 : 0'],
            ['Cas3', '0 : 4 : 15'],
          ]}
          place="left-[650px]"
          split="w-[70px]"
        />
        <EventWindow
          title="Událost závislá na místě"
          second="Bod"
          rows={[]}
          place="left-[766px]"
          split="w-[69px]"
          scroll
        />

        <div className="absolute top-1 left-[883px] text-white">
          <div className="h-[25px] w-0.5 bg-linear-to-b from-[#12c8e0] from-35% via-[#8b1414] via-50% to-[#1c9a34]" />
          <span>er</span>
        </div>
        <div className="absolute top-1 right-[11px] flex">
          <DesktopIcon label={'Menu –\nzástupce'}>
            <OpenRailsIcon className="size-full" />
          </DesktopIcon>
          <DesktopIcon label={'Editors &\nTools'}>
            <TrainSimIcon className="size-full" />
          </DesktopIcon>
          <DesktopIcon label={'Train\nSimulator'}>
            <TrainSimIcon className="size-full" />
          </DesktopIcon>
        </div>
        <RadioGadget />

        <div className="absolute top-[392px] left-0 grid auto-rows-[55px]">
          <DesktopIcon label={'TrucksBook\nClient'}>
            <TrucksBookIcon />
          </DesktopIcon>
          <DesktopIcon label="Video-Rep...">
            <VideoReelIcon />
          </DesktopIcon>
          <DesktopIcon label="TeamViewer">
            <TeamViewerIcon />
          </DesktopIcon>
        </div>

        <ManipulationWindow />
        <LauncherWindow />
        <SettingsDialog />
      </div>
      <Taskbar />
    </main>
  );
}
